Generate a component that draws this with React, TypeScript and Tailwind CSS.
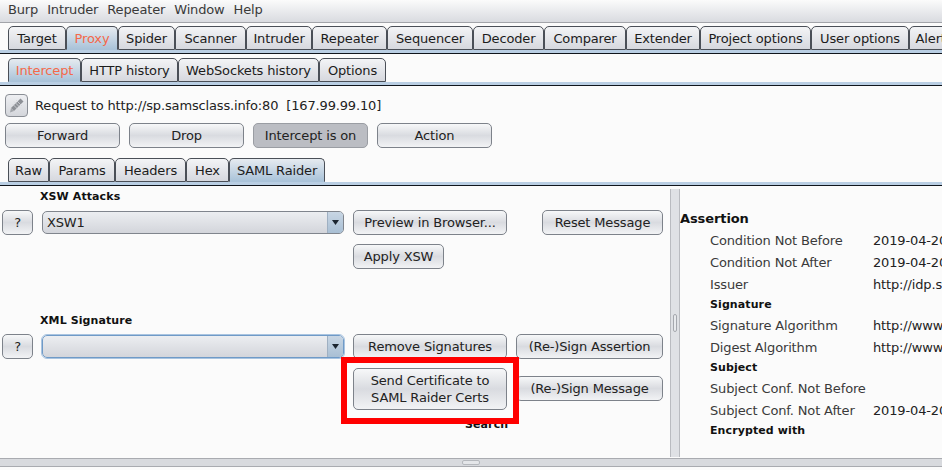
const topTabs = [
  { label: 'Target', width: 'w-[58px]' },
  { label: 'Proxy', width: 'w-[52px]' },
  { label: 'Spider', width: 'w-[57px]' },
  { label: 'Scanner', width: 'w-[71px]' },
  { label: 'Intruder', width: 'w-[66px]' },
  { label: 'Repeater', width: 'w-[75px]' },
  { label: 'Sequencer', width: 'w-[86px]' },
  { label: 'Decoder', width: 'w-[71px]' },
  { label: 'Comparer', width: 'w-[82px]' },
  { label: 'Extender', width: 'w-[74px]' },
  { label: 'Project options', width: 'w-[111px]' },
  { label: 'User options', width: 'w-[98px]' },
  { label: 'Alerts', width: 'w-[50px]' },
]
const proxyTabs = [
  { label: 'Intercept', width: 'w-[73px]' },
  { label: 'HTTP history', width: 'w-[97px]' },
  { label: 'WebSockets history', width: 'w-[141px]' },
  { label: 'Options', width: 'w-[67px]' },
]
const messageTabs = [
  { label: 'Raw', width: 'w-[41px]' },
  { label: 'Params', width: 'w-[66px]' },
  { label: 'Headers', width: 'w-[71px]' },
  { label: 'Hex', width: 'w-[43px]' },
  { label: 'SAML Raider', width: 'w-[96px]' },
]

function Tab({ label, width, selected, accent }: { label: string; width: string; selected?: boolean; accent?: boolean }) {
  return (
    <div
      className={
        'flex h-[24px] shrink-0 items-center justify-center rounded-t-[5px] border border-[#4a4f57] ' +
        width +
        (selected
          ? ' border-b-[#aac3d9] bg-gradient-to-b from-[#e6ebf0] to-[#aac3d9] '
          : ' bg-gradient-to-b from-[#f3f4f6] to-[#d6d8de] ') +
        (accent ? 'text-[#f4694a]' : 'text-[#1c1c1c]')
      }
    >
      {label}
    </div>
  )
}

function TabBand() {
  return <div className="h-[4px] shrink-0 border-b border-[#10151c] bg-[#b9cee3]" />
}

function Button({ label, className = '', pressed }: { label: string; className?: string; pressed?: boolean }) {
  return (
    <div
      className={
        'flex h-[25px] shrink-0 items-center justify-center rounded-[5px] border text-[#222] ' +
        (pressed
          ? 'border-[#9a9da3] bg-[#bbbdc3] '
          : 'border-[#7d828a] bg-gradient-to-b from-[#f7f8f9] via-[#d9dbe0] to-[#f2f3f5] ') +
        className
      }
    >
      {label}
    </div>
  )
}

function Combo({ value, focused }: { value?: string; focused?: boolean }) {
  return (
    <div
      className={
        'flex h-[23px] w-[302px] shrink-0 items-stretch overflow-hidden rounded-[5px] border bg-gradient-to-b from-[#eceef1] to-[#d3d5db] ' +
        (focused ? 'border-[#6f9ac7] outline outline-1 outline-[#a9c4e0]' : 'border-[#80858d]')
      }
    >
      <div className="flex-1 pl-[4px] leading-[21px] text-[#222]">{value}</div>
      <div className="flex w-[16px] items-center justify-center border-l border-[#9fb0c2] bg-gradient-to-b from-[#c8d6e4] to-[#a9bfd4]">
        <svg width="7" height="5" viewBox="0 0 7 5">
          <path d="M0 0h7L3.5 5z" fill="#1b2530" />
        </svg>
      </div>
    </div>
  )
}

function Heading({ children, className = '' }: { children: string; className?: string }) {
  return <div className={'text-[11px] leading-[14px] font-bold tracking-[0.1px] text-[#111] ' + className}>{children}</div>
}

function InfoRow({ label, value }: { label: string; value?: string }) {
  return (
    <div className="flex h-[22px] items-center pl-[30px] whitespace-nowrap">
      <div className="w-[163px] shrink-0 text-[#3a3a3a]">{label}</div>
      <div className="text-[#222]">{value}</div>
    </div>
  )
}

function InfoHeading({ children }: { children: string }) {
  return (
    <div className="flex h-[19px] items-center pt-[1px] pl-[30px]">
      <Heading>{children}</Heading>
    </div>
  )
}

export default function App() {
  return (
    <div className="flex h-[470px] w-[942px] flex-col overflow-hidden bg-[#fbfbfb] font-['DejaVu_Sans',sans-serif] text-[13px] leading-none tracking-[-0.15px]">
      {/* menu */}
      <div className="flex h-[23px] shrink-0 items-center gap-[9px] border-b border-[#a2a4a9] bg-gradient-to-b from-[#fbfbfb] to-[#d9dbe0] pb-[4px] pl-[8px] text-[#3a3a3a]">
        <span>Burp</span>
        <span>Intruder</span>
        <span>Repeater</span>
        <span>Window</span>
        <span>Help</span>
      </div>

      {/* main tabs */}
      <div className="flex shrink-0 pt-[3px] pl-[8px]">
        {topTabs.map((t) => (
          <Tab key={t.label} label={t.label} width={t.width} selected={t.label === 'Proxy'} accent={t.label === 'Proxy'} />
        ))}
      </div>
      <TabBand />

      {/* proxy tabs */}
      <div className="flex shrink-0 pt-[4px] pl-[8px]">
        {proxyTabs.map((t) => (
          <Tab key={t.label} label={t.label} width={t.width} selected={t.label === 'Intercept'} accent={t.label === 'Intercept'} />
        ))}
      </div>
      <TabBand />

      {/* request line */}
      <div className="mt-[8px] flex h-[23px] shrink-0 items-center gap-[7px] pl-[5px] text-[#222]">
        <div className="flex h-[23px] w-[23px] items-center justify-center rounded-[4px] border border-[#8a8e95] bg-gradient-to-b from-[#eeeff2] to-[#d4d6db]">
          <svg width="17" height="17" viewBox="0 0 17 17">
            <path d="M12.5 1.5l3 3L6 14l-3-3z" fill="#8d9096" />
            <path d="M6 4.5l6 6M8 3l6 6M4.5 7l6 6" stroke="#d4d6db" strokeWidth="0.8" />
            <path d="M3 11l3 3-4 1.5z" fill="#a3a6ab" />
          </svg>
        </div>
        <span className="whitespace-pre">Request to http://sp.samsclass.info:80  [167.99.99.10]</span>
      </div>

      {/* intercept buttons */}
      <div className="mt-[6px] flex shrink-0 gap-[9px] pl-[5px]">
        <Button label="Forward" className="w-[115px]" />
        <Button label="Drop" className="w-[115px]" />
        <Button label="Intercept is on" className="w-[115px]" pressed />
        <Button label="Action" className="w-[115px]" />
      </div>

      {/* message tabs */}
      <div className="mt-[10px] flex shrink-0 pl-[8px]">
        {messageTabs.map((t) => (
          <Tab key={t.label} label={t.label} width={t.width} selected={t.label === 'SAML Raider'} />
        ))}
      </div>
      <TabBand />

      {/* SAML Raider panel */}
      <div className="flex min-h-0 flex-1">
        <div className="relative w-[670px] shrink-0 pt-[4px]">
          <Heading className="ml-[40px]">XSW Attacks</Heading>

          <div className="mt-[6px] flex items-center pr-[7px] pl-[2px]">
            <Button label="?" className="w-[31px]" />
            <div className="ml-[9px]">
              <Combo value="XSW1" />
            </div>
            <Button label="Preview in Browser..." className="ml-[9px] w-[154px]" />
            <Button label="Reset Message" className="ml-auto w-[121px]" />
          </div>

          <Button label="Apply XSW" className="mt-[9px] ml-[353px] w-[91px]" />

          <Heading className="mt-[45px] ml-[40px]">XML Signature</Heading>

          <div className="mt-[6px] flex items-center pr-[7px] pl-[2px]">
            <Button label="?" className="w-[31px]" />
            <div className="ml-[9px]">
              <Combo focused />
            </div>
            <Button label="Remove Signatures" className="ml-[9px] w-[154px]" />
            <Button label="(Re-)Sign Assertion" className="ml-auto w-[147px]" />
          </div>

          <div className="mt-[9px] flex items-start pr-[7px] pl-[353px]">
            <div className="flex h-[42px] w-[154px] shrink-0 flex-col items-center justify-center rounded-[5px] border border-[#7d828a] bg-gradient-to-b from-[#f7f8f9] via-[#d9dbe0] to-[#f2f3f5] leading-[17px] text-[#222]">
              <span>Send Certificate to</span>
              <span>SAML Raider Certs</span>
            </div>
            <Button label="(Re-)Sign Message" className="mt-[8px] ml-auto w-[147px]" />
          </div>

          <Heading className="mt-[8px] ml-[465px]">Search</Heading>

          {/* red highlight over the screenshot */}
          <div className="absolute top-[171px] left-[341px] h-[67px] w-[178px] border-[6px] border-[#ff0000]" />
        </div>

        {/* split handle */}
        <div className="relative mt-[3px] mb-[1px] flex w-[10px] shrink-0 items-center justify-center border-x border-[#b9bbc0] bg-[#dfe1e5]">
          <div className="h-[18px] w-[4px] rounded-[2px] border border-[#a5a8ae] bg-[#e8eaed]" />
        </div>

        <div className="min-w-0 flex-1 overflow-hidden pt-[26px]">
          <div className="mb-[3px] h-[14px] text-[13px] leading-[14px] font-bold tracking-[-0.1px] text-[#111]">Assertion</div>
          <InfoRow label="Condition Not Before" value="2019-04-20T17:10:41Z" />
          <InfoRow label="Condition Not After" value="2019-04-20T17:15:41Z" />
          <InfoRow label="Issuer" value="http://idp.samsclass.info" />
          <InfoHeading>Signature</InfoHeading>
          <InfoRow label="Signature Algorithm" value="http://www.w3.org/2000/09" />
          <InfoRow label="Digest Algorithm" value="http://www.w3.org/2000/09" />
          <InfoHeading>Subject</InfoHeading>
          <InfoRow label="Subject Conf. Not Before" />
          <InfoRow label="Subject Conf. Not After" value="2019-04-20T17:15:41Z" />
          <InfoHeading>Encrypted with</InfoHeading>
        </div>
      </div>

      {/* bottom split handle */}
      <div className="mb-[3px] flex h-[9px] shrink-0 items-center justify-center border-y border-[#a9abb0] bg-[#d8dade]">
        <div className="ml-[-1px] h-[5px] w-[18px] rounded-[2px] border border-[#b5b8bd] bg-[#e4e6e9]" />
      </div>
    </div>
  )
}
